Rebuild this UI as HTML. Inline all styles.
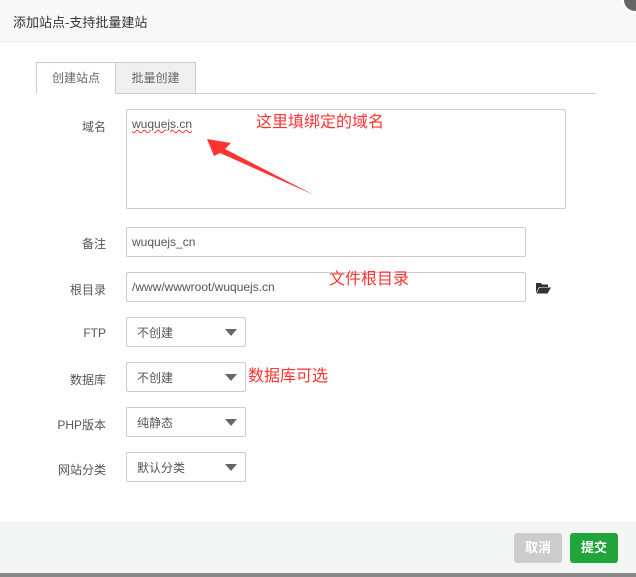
<!DOCTYPE html>
<html><head><meta charset="utf-8"><style>
*{margin:0;padding:0;box-sizing:border-box}
body{width:636px;height:577px;background:#fff;font-family:"Liberation Sans","Noto Sans CJK SC",sans-serif;font-size:12px;color:#555;position:relative;overflow:hidden}
.hd{position:absolute;left:0;top:0;width:636px;height:42px;background:#f8f8f8;border-bottom:1px solid #eee;font-size:13px;color:#333;padding:12px 0 0 13px}
.close{position:absolute;left:622px;top:-13px;width:26px;height:26px;border-radius:50%;background:#666;border:2px solid #fff}
.tab{position:absolute;top:62px;height:32px;font-size:12px;color:#666;text-align:center;line-height:30px;border:1px solid #ccc}
.line{position:absolute;left:36px;top:93px;width:560px;height:1px;background:#ccc}
.lbl{position:absolute;right:530px;font-size:12px;color:#555;text-align:right}
.in{position:absolute;left:126px;border:1px solid #ccc;border-radius:2px;background:#fff;color:#555;font-size:12px;padding-left:5px}
.sel{position:absolute;left:126px;width:120px;height:30px;border:1px solid #ccc;border-radius:2px;padding:6px 0 0 10px;font-size:12px;color:#555}
.sel:after{content:"";position:absolute;right:8px;top:11px;border-left:6px solid transparent;border-right:6px solid transparent;border-top:7px solid #666}
.red{position:absolute;color:#f33;font-size:16px}
.ft{position:absolute;left:0;top:522px;width:636px;height:51px;background:#f4f6f6;border-top:1px solid #eee}
.bot{position:absolute;left:0;top:573px;width:636px;height:4px;background:#8a8a8a}
.btn{position:absolute;top:533px;height:30px;border-radius:3px;color:#fff;font-size:13px;font-weight:bold;text-align:center;line-height:30px}
</style></head><body>
<div class="hd">添加站点-支持批量建站</div>
<div class="close"></div>
<div class="tab" style="left:36px;width:80px;background:#fff;border-bottom-color:#fff;z-index:2">创建站点</div>
<div class="tab" style="left:115px;width:81px;background:#f0f0f0">批量创建</div>
<div class="line"></div>

<div class="lbl" style="top:118px">域名</div>
<div class="in" style="top:109px;width:440px;height:100px;padding-top:7px"><span style="text-decoration:underline wavy #f33;text-decoration-thickness:1px">wuquejs.cn</span></div>

<div class="lbl" style="top:235px">备注</div>
<div class="in" style="top:227px;width:400px;height:30px;line-height:28px">wuquejs_cn</div>

<div class="lbl" style="top:281px">根目录</div>
<div class="in" style="top:272px;width:400px;height:30px;line-height:28px">/www/wwwroot/wuquejs.cn</div>
<svg style="position:absolute;left:536px;top:282px" width="15" height="12" viewBox="0 0 15 12"><path d="M0 1h5l1 1.5h6V5H3L0 11z" fill="#333"/><path d="M3.5 5.5H15L11.5 11.5H0.5z" fill="#333"/></svg>

<div class="lbl" style="top:326px">FTP</div>
<div class="sel" style="top:317px">不创建</div>
<div class="lbl" style="top:371px">数据库</div>
<div class="sel" style="top:362px">不创建</div>
<div class="lbl" style="top:416px">PHP版本</div>
<div class="sel" style="top:407px">纯静态</div>
<div class="lbl" style="top:461px">网站分类</div>
<div class="sel" style="top:452px">默认分类</div>

<div class="red" style="left:256px;top:108px">这里填绑定的域名</div>
<div class="red" style="left:329px;top:265px">文件根目录</div>
<div class="red" style="left:248px;top:362px">数据库可选</div>
<svg style="position:absolute;left:0;top:0" width="636" height="577"><path d="M207 139L231 143L225 149L314 195L220 153L214 156Z" fill="#f33"/></svg>

<div class="ft"></div>
<div class="btn" style="left:514px;width:48px;background:#ccc">取消</div>
<div class="btn" style="left:570px;width:48px;background:#20a53a">提交</div>
<div class="bot"></div>
</body></html>
